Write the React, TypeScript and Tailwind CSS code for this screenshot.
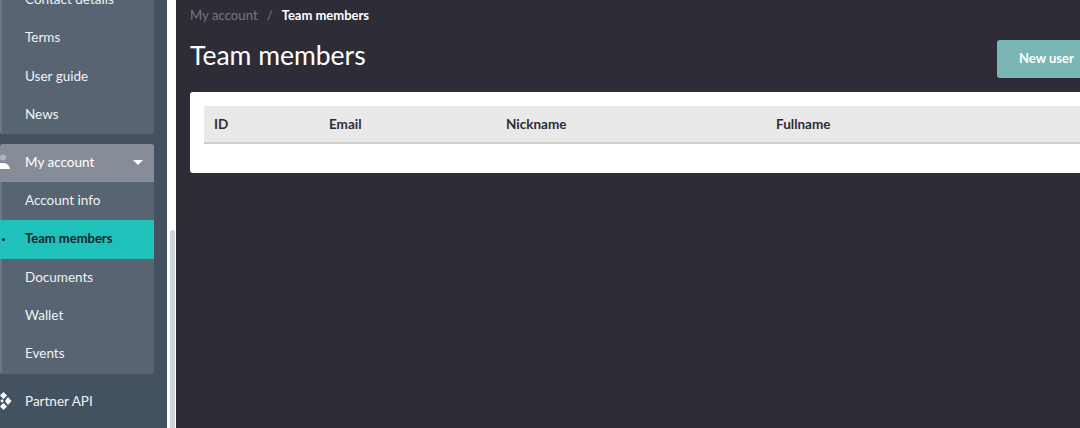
const font = { fontFamily: 'Lato, "Open Sans", sans-serif' };

function SubItem({ label, active }: { label: string; active?: boolean }) {
  if (active) {
    return (
      <div className="relative -ml-[2px] flex h-[38.3px] items-center bg-[#1fc1bb] pb-[1px] pl-[25px] text-[13px] font-bold text-[#12262c]">
        <span className="absolute left-[2px] h-[3px] w-[3px] rounded-full bg-[#12262c]" />
        {label}
      </div>
    );
  }
  return (
    <div className="flex h-[38.3px] items-center pb-[2px] pl-[23px] text-[13.5px] text-[#f0f3f5]">
      {label}
    </div>
  );
}

function UserIcon() {
  return (
    <svg width="11" height="16" viewBox="0 0 11 16" className="absolute left-0 text-white" fill="currentColor" aria-hidden>
      <circle cx="3" cy="3.5" r="3" opacity="0.35" />
      <path d="M0 9c3 0 7-.5 9 3 .5 1 .8 2 1 3H0z" />
    </svg>
  );
}

function PartnerIcon() {
  return (
    <svg width="12" height="18" viewBox="0 0 12 18" className="absolute left-0 text-white" fill="currentColor" aria-hidden>
      <path d="M3.5 0 7 3.5 3.5 7 0 3.5zM8 5 11.5 9 8 13 5 9zM3.5 11 7 14.5 3.5 18 0 14.5z" />
      <circle cx="2" cy="9" r="1.4" />
    </svg>
  );
}

export default function App() {
  return (
    <div className="flex h-[428px] w-[1080px] overflow-hidden bg-[#2e2d37]" style={font}>
      <aside className="flex w-[167px] shrink-0 flex-col overflow-hidden bg-[#445161]">
        <div className="-mt-[19px] mr-[13px] rounded-b-[3px] border-l-2 border-[#6d7885] bg-[#586472]">
          <SubItem label="Contact details" />
          <SubItem label="Terms" />
          <SubItem label="User guide" />
          <SubItem label="News" />
        </div>

        <div className="mr-[13px] mt-[10px] overflow-hidden rounded-[3px] bg-[#586472]">
          <div className="relative flex h-[38px] items-center bg-[#868d98] pb-[2px] pl-[25px] pr-[11px] text-[13.5px] text-white">
            <UserIcon />
            <span className="flex-1">My account</span>
            <span className="h-0 w-0 border-x-[5px] border-t-[5px] border-x-transparent border-t-white" />
          </div>
          <div className="border-l-2 border-[#6d7885]">
            <SubItem label="Account info" />
            <SubItem label="Team members" active />
            <SubItem label="Documents" />
            <SubItem label="Wallet" />
            <SubItem label="Events" />
          </div>
        </div>

        <div className="relative mt-[9px] flex h-[38px] items-center pb-[2px] pl-[25px] text-[13.5px] text-[#f0f3f5]">
          <PartnerIcon />
          Partner API
        </div>
      </aside>

      <div className="flex w-[9px] shrink-0 flex-col bg-white pl-[3px] pr-[1px] pt-[230px]">
        <div className="flex-1 rounded-t-sm bg-[#cdd6de]" />
      </div>

      <main className="min-w-0 flex-1 pl-[14px]">
        <div className="flex h-[32px] items-center text-[13.2px]">
          <span className="text-[#77767f]">My account</span>
          <span className="ml-[9px] mr-[9px] text-[#77767f]">/</span>
          <span className="text-[13px] font-bold text-white">Team members</span>
        </div>

        <div className="flex h-[60px] w-[926px] items-start justify-between">
          <h1 className="mt-[5px] text-[26.5px] leading-[36px] text-white">Team members</h1>
          <button className="mt-[8px] h-[38px] w-[119px] rounded-[3px] bg-[#7ab6b6] pl-[22px] text-left text-[13px] font-bold text-white">
            New user
          </button>
        </div>

        <div className="h-[81px] w-[926px] rounded-[3px] bg-white pl-[14px] pt-[14px]">
          <div className="flex h-[38px] items-center border-b-2 border-[#cfcfcf] bg-[#e9e9e9] text-[13.5px] font-bold text-[#2e2d37]">
            <span className="ml-[10px] w-[115px]">ID</span>
            <span className="w-[177px]">Email</span>
            <span className="w-[270px]">Nickname</span>
            <span>Fullname</span>
          </div>
        </div>
      </main>
    </div>
  );
}
